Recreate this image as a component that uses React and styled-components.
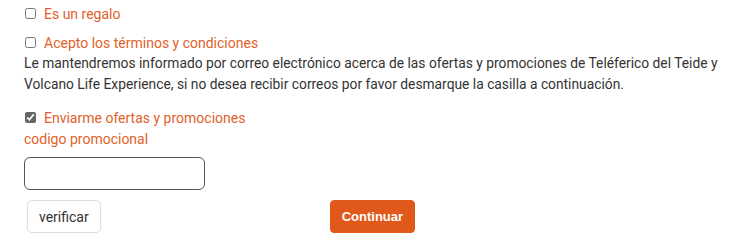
import React from "react";
import styled, { createGlobalStyle } from "styled-components";

const Global = createGlobalStyle`
  body {
    margin: 0;
    background: #fff;
    font-family: Roboto, "Liberation Sans", sans-serif;
  }
`;

export const Form = styled.div`
  padding: 3px 24px 0 24px;
  width: 702px;
`;

export const CheckRow = styled.label`
  display: flex;
  align-items: center;
  height: 21px;
  margin-top: ${(props) => props.top || 0}px;
  color: #e0622b;
  font-size: 14px;
  cursor: pointer;
`;

export const Box = styled.input`
  width: 11px;
  height: 11px;
  margin: 0 8px 0 1px;
  accent-color: #666;
`;

export const Notice = styled.p`
  margin: 0;
  color: #333;
  font-size: 13.8px;
  line-height: 21px;
`;

export const Label = styled.div`
  color: #e0622b;
  font-size: 14px;
  line-height: 21px;
  margin-top: 1px;
`;

export const Code = styled.input`
  display: block;
  box-sizing: border-box;
  width: 181px;
  height: 33px;
  margin-top: 7px;
  border: 1px solid #555;
  border-radius: 6px;
  outline: none;
`;

export const Actions = styled.div`
  display: flex;
  align-items: center;
  margin-top: 10px;
  padding-left: 3px;
`;

export const Button = styled.button`
  box-sizing: border-box;
  height: 33px;
  padding: 0 11px;
  margin-left: ${(props) => props.offset || 0}px;
  border-radius: ${(props) => (props.primary ? 4 : 5)}px;
  border: 1px solid ${(props) => (props.primary ? "#e0581a" : "#ddd")};
  background: ${(props) => (props.primary ? "#e0581a" : "#fff")};
  color: ${(props) => (props.primary ? "#fff" : "#333")};
  font-family: ${(props) => (props.primary ? '"Liberation Sans", Arial, sans-serif' : 'Roboto, sans-serif')};
  font-weight: ${(props) => (props.primary ? 700 : 400)};
  font-size: ${(props) => (props.primary ? 13 : 14)}px;
  cursor: pointer;
`;

const App = () => {
  return (
    <Form>
      <Global />
      <CheckRow>
        <Box type="checkbox" />
        Es un regalo
      </CheckRow>
      <CheckRow top={8}>
        <Box type="checkbox" />
        Acepto los términos y condiciones
      </CheckRow>
      <Notice>
        Le mantendremos informado por correo electrónico acerca de las ofertas y promociones de Teléferico del Teide y
        Volcano Life Experience, si no desea recibir correos por favor desmarque la casilla a continuación.
      </Notice>
      <CheckRow top={12}>
        <Box type="checkbox" defaultChecked />
        Enviarme ofertas y promociones
      </CheckRow>
      <Label>codigo promocional</Label>
      <Code type="text" />
      <Actions>
        <Button>verificar</Button>
        <Button primary offset={229}>Continuar</Button>
      </Actions>
    </Form>
  );
};

export default App;
